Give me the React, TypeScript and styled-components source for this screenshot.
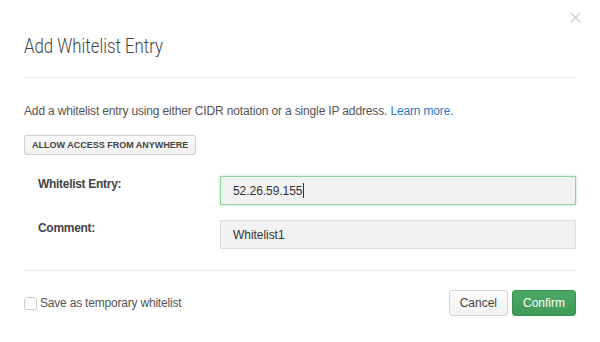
import React from "react";
import styled, { createGlobalStyle } from "styled-components";

const Global = createGlobalStyle`
  html, body { margin: 0; padding: 0; background: #fff; }
  body { font-family: "Liberation Sans", Arial, sans-serif; color: #333; }
  * { box-sizing: border-box; }
`;

const Modal = styled.div`
  position: relative;
  width: 600px;
  height: 342px;
  padding: 0 24px;
  background: #fff;
`;

const Close = styled.button`
  position: absolute;
  top: 11px;
  right: 19px;
  width: 12px;
  height: 12px;
  padding: 0;
  border: none;
  background: transparent;
  display: flex;
  align-items: center;
  justify-content: center;
`;

const Header = styled.div`
  height: 78px;
  padding-top: 34px;
  border-bottom: 1px solid #ececec;
`;

const Title = styled.h1`
  display: inline-block;
  margin: 0;
  font-family: Roboto, "Liberation Sans", sans-serif;
  font-weight: 300;
  font-size: 21px;
  line-height: 24px;
  color: #444;
  white-space: nowrap;
  transform: scale(0.8, 1);
  transform-origin: 0 50%;
`;

const Body = styled.div`
  padding-top: 25px;
  height: 193px;
  border-bottom: 1px solid #ececec;
`;

const Intro = styled.p`
  margin: 0;
  font-size: 12px;
  letter-spacing: -0.15px;
  line-height: 16px;
  color: #555;
`;

const Link = styled.a`
  color: #2d7bc4;
  text-decoration: none;
`;

const SmallButton = styled.button`
  margin-top: 16px;
  height: 20px;
  padding: 0 7px;
  font-family: "Liberation Sans", Arial, sans-serif;
  font-size: 9px;
  font-weight: bold;
  color: #444;
  background: linear-gradient(#fafafa, #f0f0f0);
  border: 1px solid #d0d0d0;
  border-radius: 2px;
  display: block;
`;

const Form = styled.div`
  margin-top: 21px;
  display: flex;
  flex-direction: column;
  gap: 15px;
`;

const Row = styled.div`
  display: flex;
  align-items: center;
  padding-left: 14px;
`;

const Label = styled.label`
  width: 182px;
  font-size: 12px;
  letter-spacing: -0.3px;
  font-weight: bold;
  color: #444;
  align-self: flex-start;
  padding-top: 1px;
`;

const Input = styled.div<{ $focused?: boolean }>`
  flex: 1;
  height: 29px;
  padding: 0 12px;
  display: flex;
  align-items: center;
  font-size: 12px;
  letter-spacing: -0.05px;
  color: #333;
  background: #f2f2f2;
  border: 1px solid ${(p) => (p.$focused ? "#8fd39e" : "#dedede")};
  box-shadow: ${(p) => (p.$focused ? "0 0 3px rgba(120, 200, 140, 0.5)" : "none")};
`;

const Caret = styled.span`
  display: inline-block;
  width: 1px;
  height: 15px;
  background: #333;
  margin-left: 1px;
`;

const Footer = styled.div`
  display: flex;
  align-items: center;
  justify-content: space-between;
  padding-top: 19px;
`;

const Check = styled.label`
  display: flex;
  align-items: center;
  gap: 3px;
  font-size: 12px;
  letter-spacing: -0.2px;
  color: #555;
`;

const Box = styled.span`
  width: 13px;
  height: 13px;
  border: 1px solid #c8c8c8;
  border-radius: 3px;
  background: #fff;
`;

const Actions = styled.div`
  display: flex;
  gap: 4px;
`;

const Btn = styled.button<{ $primary?: boolean }>`
  height: 26px;
  padding: 0 10px;
  font-family: "Liberation Sans", Arial, sans-serif;
  font-size: 12px;
  border-radius: 3px;
  color: ${(p) => (p.$primary ? "#fff" : "#444")};
  background: ${(p) =>
    p.$primary ? "linear-gradient(#4aa864, #3f9a57)" : "linear-gradient(#fdfdfd, #f1f1f1)"};
  border: 1px solid ${(p) => (p.$primary ? "#3a8f50" : "#d4d4d4")};
`;

export default function App() {
  return (
    <>
      <Global />
      <Modal>
        <Close aria-label="close">
          <svg width="11" height="11" viewBox="0 0 11 11">
            <path d="M1 1 L10 10 M10 1 L1 10" stroke="#c9c9c9" strokeWidth="1.2" />
          </svg>
        </Close>
        <Header>
          <Title>Add Whitelist Entry</Title>
        </Header>
        <Body>
          <Intro>
            Add a whitelist entry using either CIDR notation or a single IP address.{" "}
            <Link href="#">Learn more</Link>.
          </Intro>
          <SmallButton>ALLOW ACCESS FROM ANYWHERE</SmallButton>
          <Form>
            <Row>
              <Label>Whitelist Entry:</Label>
              <Input $focused>
                52.26.59.155
                <Caret />
              </Input>
            </Row>
            <Row>
              <Label>Comment:</Label>
              <Input>Whitelist1</Input>
            </Row>
          </Form>
        </Body>
        <Footer>
          <Check>
            <Box />
            Save as temporary whitelist
          </Check>
          <Actions>
            <Btn>Cancel</Btn>
            <Btn $primary>Confirm</Btn>
          </Actions>
        </Footer>
      </Modal>
    </>
  );
}
